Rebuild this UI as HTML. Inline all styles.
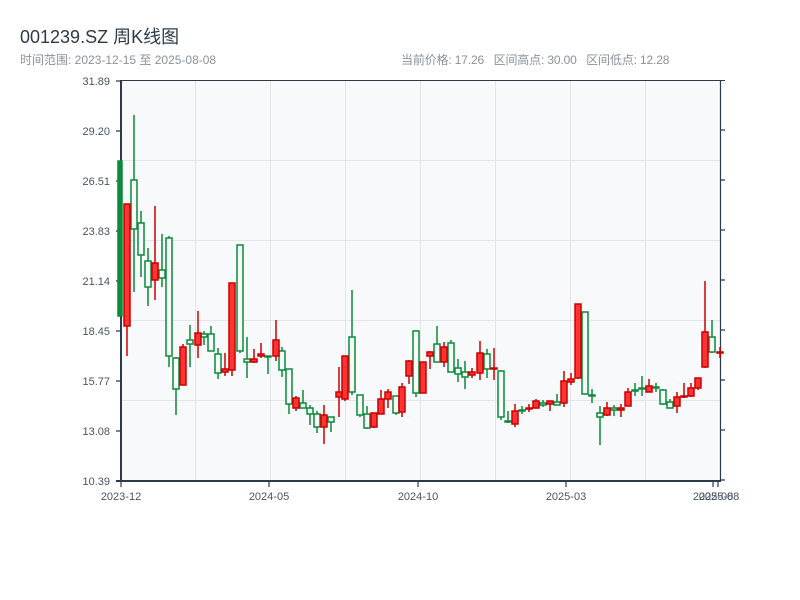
<!DOCTYPE html>
<html><head><meta charset="utf-8"><style>
body{margin:0;width:800px;height:600px;background:#fff;overflow:hidden;font-family:"Liberation Sans","Noto Sans CJK SC",sans-serif}
.t{position:absolute;left:20px;top:23px;font-size:18px;color:#2c3a4b}
.s{position:absolute;left:20px;top:51px;font-size:12px;color:#8a929c}
.r{position:absolute;left:401px;top:51px;font-size:12px;color:#8a929c;white-space:pre;letter-spacing:-0.15px}
svg{position:absolute;left:0;top:0}
</style></head><body>
<div class="t">001239.SZ 周K线图</div>
<div class="s">时间范围: 2023-12-15 至 2025-08-08</div>
<div class="r">当前价格: 17.26   区间高点: 30.00   区间低点: 12.28</div>
<svg width="800" height="600" font-family="Liberation Sans, sans-serif">
<rect x="121" y="80" width="599" height="401" fill="#f7f9fb"/>
<g stroke="#e2e5ea" stroke-width="1">
<line x1="195.5" y1="80" x2="195.5" y2="481"/><line x1="270.5" y1="80" x2="270.5" y2="481"/><line x1="345.5" y1="80" x2="345.5" y2="481"/><line x1="420.5" y1="80" x2="420.5" y2="481"/><line x1="495.5" y1="80" x2="495.5" y2="481"/><line x1="570.5" y1="80" x2="570.5" y2="481"/><line x1="645.5" y1="80" x2="645.5" y2="481"/>
<line x1="121" y1="160.5" x2="720" y2="160.5"/><line x1="121" y1="240.5" x2="720" y2="240.5"/><line x1="121" y1="320.5" x2="720" y2="320.5"/><line x1="121" y1="400.5" x2="720" y2="400.5"/>
</g>
<g stroke="#2c3a4b" fill="none">
<line x1="121" y1="80.5" x2="725" y2="80.5" stroke-width="1"/>
<line x1="720.5" y1="80" x2="720.5" y2="482" stroke-width="1.2"/>
<line x1="121" y1="80" x2="121" y2="482" stroke-width="2"/>
<line x1="116" y1="481" x2="721" y2="481" stroke-width="2"/>
<path d="M116 81H121M116 131H121M116 181H121M116 231H121M116 281H121M116 331H121M116 381H121M116 431H121M720 130H725M720 180H725M720 230H725M720 280H725M720 330H725M720 380H725M720 430H725M720 480H725M121 481V487M269 481V487M418 481V487M566 481V487M713 481V487M718 481V487" stroke-width="1.2"/>
</g>
<g font-size="11" fill="#4a5563" text-anchor="end">
<text x="110" y="85">31.89</text><text x="110" y="135">29.20</text><text x="110" y="185">26.51</text><text x="110" y="235">23.83</text><text x="110" y="285">21.14</text><text x="110" y="335">18.45</text><text x="110" y="385">15.77</text><text x="110" y="435">13.08</text><text x="110" y="485">10.39</text>
</g>
<g font-size="11" fill="#4a5563" text-anchor="middle">
<text x="121" y="500">2023-12</text><text x="269" y="500">2024-05</text><text x="418" y="500">2024-10</text><text x="566" y="500">2025-03</text><text x="713" y="500">2025-08</text><text x="719" y="500">2025-08</text>
</g>
<g stroke-width="1.5">
<g stroke="#0a8a3a" fill="#f7f9fb">
<rect x="118" y="161" width="4" height="155" fill="#0a8a3a"/>
<line x1="134" y1="115" x2="134" y2="292"/><rect x="131" y="180" width="6" height="49"/>
<line x1="141" y1="211" x2="141" y2="277"/><rect x="138" y="223" width="6" height="32"/>
<line x1="148" y1="248" x2="148" y2="306"/><rect x="145" y="261" width="6" height="26"/>
<line x1="162" y1="234" x2="162" y2="287"/><rect x="159" y="270" width="6" height="8"/>
<line x1="169" y1="236" x2="169" y2="367"/><rect x="166" y="238" width="6" height="118"/>
<line x1="176" y1="357" x2="176" y2="415"/><rect x="173" y="358" width="6" height="31"/>
<line x1="190" y1="325" x2="190" y2="367"/><rect x="187" y="340" width="6" height="4"/>
<line x1="204" y1="331" x2="204" y2="345"/><rect x="201" y="334" width="6" height="3"/>
<line x1="211" y1="326" x2="211" y2="351"/><rect x="208" y="334" width="6" height="17"/>
<line x1="218" y1="348" x2="218" y2="379"/><rect x="215" y="354" width="6" height="19"/>
<line x1="240" y1="245" x2="240" y2="353"/><rect x="237" y="245" width="6" height="106"/>
<line x1="247" y1="337" x2="247" y2="378"/><rect x="244" y="359" width="6" height="3"/>
<line x1="268" y1="357" x2="268" y2="374"/><rect x="265" y="356" width="6" height="1"/>
<line x1="282" y1="347" x2="282" y2="377"/><rect x="279" y="351" width="6" height="19"/>
<line x1="289" y1="369" x2="289" y2="414"/><rect x="286" y="369" width="6" height="35"/>
<line x1="303" y1="390" x2="303" y2="408"/><rect x="300" y="403" width="6" height="5"/>
<line x1="310" y1="405" x2="310" y2="425"/><rect x="307" y="408" width="6" height="6"/>
<line x1="317" y1="411" x2="317" y2="433"/><rect x="314" y="414" width="6" height="13"/>
<line x1="331" y1="417" x2="331" y2="432"/><rect x="328" y="417" width="6" height="5"/>
<line x1="352" y1="290" x2="352" y2="395"/><rect x="349" y="337" width="6" height="55"/>
<line x1="360" y1="395" x2="360" y2="417"/><rect x="357" y="395" width="6" height="20"/>
<line x1="367" y1="406" x2="367" y2="429"/><rect x="364" y="414" width="6" height="14"/>
<line x1="396" y1="396" x2="396" y2="415"/><rect x="393" y="396" width="6" height="17"/>
<line x1="416" y1="331" x2="416" y2="397"/><rect x="413" y="331" width="6" height="62"/>
<line x1="437" y1="326" x2="437" y2="362"/><rect x="434" y="344" width="6" height="18"/>
<line x1="451" y1="340" x2="451" y2="372"/><rect x="448" y="343" width="6" height="29"/>
<line x1="458" y1="359" x2="458" y2="382"/><rect x="455" y="368" width="6" height="6"/>
<line x1="465" y1="361" x2="465" y2="389"/><rect x="462" y="372" width="6" height="5"/>
<line x1="487" y1="349" x2="487" y2="378"/><rect x="484" y="354" width="6" height="15"/>
<line x1="501" y1="370" x2="501" y2="420"/><rect x="498" y="371" width="6" height="46"/>
<line x1="508" y1="411" x2="508" y2="423"/><rect x="505" y="421" width="6" height="1"/>
<line x1="522" y1="406" x2="522" y2="414"/><rect x="519" y="410" width="6" height="1"/>
<line x1="543" y1="400" x2="543" y2="407"/><rect x="540" y="403" width="6" height="2"/>
<line x1="557" y1="394" x2="557" y2="405"/><rect x="554" y="402" width="6" height="3"/>
<line x1="585" y1="312" x2="585" y2="394"/><rect x="582" y="312" width="6" height="82"/>
<line x1="592" y1="389" x2="592" y2="403"/><rect x="589" y="395" width="6" height="1"/>
<line x1="600" y1="406" x2="600" y2="445"/><rect x="597" y="413" width="6" height="4"/>
<line x1="614" y1="405" x2="614" y2="416"/><rect x="611" y="408" width="6" height="2"/>
<line x1="635" y1="383" x2="635" y2="396"/><rect x="632" y="390" width="6" height="1"/>
<line x1="642" y1="376" x2="642" y2="396"/><rect x="639" y="388" width="6" height="1"/>
<line x1="656" y1="383" x2="656" y2="392"/><rect x="653" y="387" width="6" height="1"/>
<line x1="663" y1="389" x2="663" y2="405"/><rect x="660" y="390" width="6" height="14"/>
<line x1="670" y1="399" x2="670" y2="408"/><rect x="667" y="402" width="6" height="6"/>
<line x1="712" y1="320" x2="712" y2="353"/><rect x="709" y="337" width="6" height="15"/>
</g>
<g stroke="#cc0000" fill="#ff3333">
<line x1="127" y1="204" x2="127" y2="356"/><rect x="124" y="204" width="6" height="122"/>
<line x1="155" y1="206" x2="155" y2="300"/><rect x="152" y="263" width="6" height="17"/>
<line x1="183" y1="344" x2="183" y2="385"/><rect x="180" y="347" width="6" height="38"/>
<line x1="198" y1="311" x2="198" y2="358"/><rect x="195" y="333" width="6" height="12"/>
<line x1="225" y1="353" x2="225" y2="376"/><rect x="222" y="369" width="6" height="3"/>
<line x1="232" y1="283" x2="232" y2="376"/><rect x="229" y="283" width="6" height="87"/>
<line x1="254" y1="349" x2="254" y2="363"/><rect x="251" y="359" width="6" height="3"/>
<line x1="261" y1="343" x2="261" y2="358"/><rect x="258" y="354" width="6" height="2"/>
<line x1="276" y1="320" x2="276" y2="361"/><rect x="273" y="340" width="6" height="16"/>
<line x1="296" y1="396" x2="296" y2="411"/><rect x="293" y="398" width="6" height="10"/>
<line x1="324" y1="405" x2="324" y2="444"/><rect x="321" y="415" width="6" height="12"/>
<line x1="339" y1="367" x2="339" y2="417"/><rect x="336" y="392" width="6" height="5"/>
<line x1="345" y1="356" x2="345" y2="401"/><rect x="342" y="356" width="6" height="43"/>
<line x1="374" y1="413" x2="374" y2="428"/><rect x="371" y="413" width="6" height="14"/>
<line x1="381" y1="390" x2="381" y2="414"/><rect x="378" y="399" width="6" height="15"/>
<line x1="388" y1="389" x2="388" y2="408"/><rect x="385" y="392" width="6" height="7"/>
<line x1="402" y1="383" x2="402" y2="417"/><rect x="399" y="387" width="6" height="25"/>
<line x1="409" y1="360" x2="409" y2="384"/><rect x="406" y="361" width="6" height="15"/>
<line x1="423" y1="362" x2="423" y2="393"/><rect x="420" y="362" width="6" height="31"/>
<line x1="430" y1="351" x2="430" y2="369"/><rect x="427" y="352" width="6" height="4"/>
<line x1="444" y1="342" x2="444" y2="367"/><rect x="441" y="347" width="6" height="15"/>
<line x1="472" y1="368" x2="472" y2="378"/><rect x="469" y="372" width="6" height="3"/>
<line x1="480" y1="341" x2="480" y2="380"/><rect x="477" y="353" width="6" height="20"/>
<line x1="494" y1="348" x2="494" y2="380"/><rect x="491" y="368" width="6" height="1"/>
<line x1="515" y1="404" x2="515" y2="427"/><rect x="512" y="411" width="6" height="13"/>
<line x1="529" y1="404" x2="529" y2="412"/><rect x="526" y="408" width="6" height="1"/>
<line x1="536" y1="399" x2="536" y2="408"/><rect x="533" y="401" width="6" height="7"/>
<line x1="550" y1="401" x2="550" y2="411"/><rect x="547" y="401" width="6" height="3"/>
<line x1="564" y1="371" x2="564" y2="407"/><rect x="561" y="381" width="6" height="22"/>
<line x1="571" y1="373" x2="571" y2="385"/><rect x="568" y="379" width="6" height="3"/>
<line x1="578" y1="304" x2="578" y2="379"/><rect x="575" y="304" width="6" height="74"/>
<line x1="607" y1="402" x2="607" y2="416"/><rect x="604" y="408" width="6" height="7"/>
<line x1="621" y1="404" x2="621" y2="417"/><rect x="618" y="408" width="6" height="2"/>
<line x1="628" y1="388" x2="628" y2="406"/><rect x="625" y="392" width="6" height="14"/>
<line x1="649" y1="379" x2="649" y2="392"/><rect x="646" y="386" width="6" height="6"/>
<line x1="677" y1="392" x2="677" y2="413"/><rect x="674" y="397" width="6" height="9"/>
<line x1="684" y1="383" x2="684" y2="398"/><rect x="681" y="396" width="6" height="1"/>
<line x1="691" y1="383" x2="691" y2="397"/><rect x="688" y="388" width="6" height="8"/>
<line x1="698" y1="378" x2="698" y2="390"/><rect x="695" y="378" width="6" height="10"/>
<line x1="705" y1="281" x2="705" y2="368"/><rect x="702" y="332" width="6" height="35"/>
<line x1="720" y1="347" x2="720" y2="358"/><rect x="717" y="352" width="6" height="1"/>
</g>
</g>
</svg>
</body></html>
